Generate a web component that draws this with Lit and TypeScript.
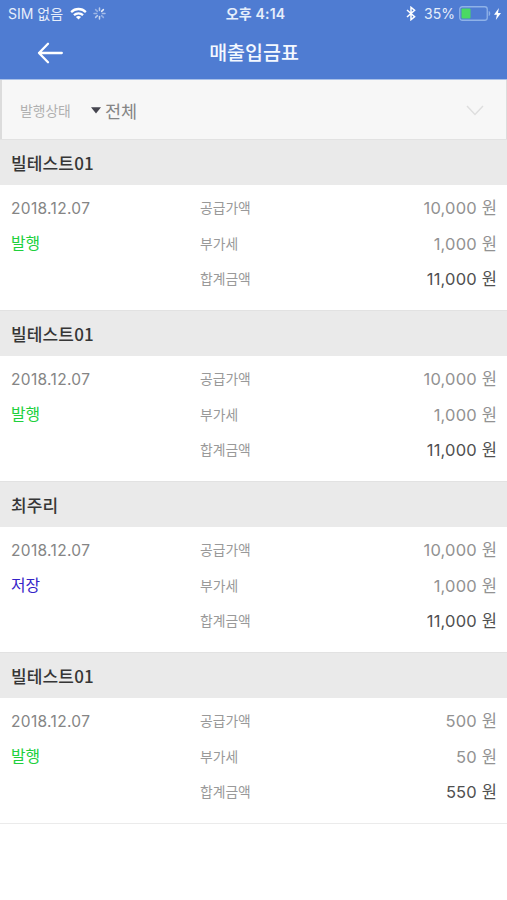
import { LitElement, html, css } from "lit";
import { customElement, property } from "lit/decorators.js";

interface Slip {
  name: string;
  date: string;
  status: string;
  saved?: boolean;
  supply: string;
  tax: string;
  total: string;
}

const SLIPS: Slip[] = [
  { name: "빌테스트01", date: "2018.12.07", status: "발행", supply: "10,000", tax: "1,000", total: "11,000" },
  { name: "빌테스트01", date: "2018.12.07", status: "발행", supply: "10,000", tax: "1,000", total: "11,000" },
  { name: "최주리", date: "2018.12.07", status: "저장", saved: true, supply: "10,000", tax: "1,000", total: "11,000" },
  { name: "빌테스트01", date: "2018.12.07", status: "발행", supply: "500", tax: "50", total: "550" },
];

@customElement("status-bar")
class StatusBar extends LitElement {
  static styles = css`
    :host {
      display: grid;
      grid-template-columns: 1fr auto 1fr;
      align-items: center;
      height: 27px;
      padding: 0 6px 0 8px;
      color: #e6eefb;
      font-size: 14px;
      line-height: 27px;
      white-space: nowrap;
    }
    .side { display: flex; align-items: center; }
    .right { justify-content: flex-end; }
    .wifi { margin-left: 7px; }
    .spinner { margin-left: 6px; }
    .clock { font-weight: 600; letter-spacing: 0.2px; padding-left: 2px; }
    .percent { margin-left: 8px; }
    .battery { margin-left: 4px; }
    .bolt { margin-left: 3px; }
    svg { display: block; }
  `;
  render() {
    return html`
      <div class="side">
        <span>SIM 없음</span>
        <svg class="wifi" width="17" height="13" viewBox="0 0 18 13" preserveAspectRatio="none" fill="none" stroke="#fff" stroke-width="2.4">
          <path d="M1.2 5.1C5.5 1 12.5 1 16.8 5.1" />
          <path d="M4.2 8.2C6.9 5.7 11.1 5.7 13.8 8.2" />
          <path d="M9 12.6L6.3 9.9C7.8 8.6 10.2 8.6 11.7 9.9Z" fill="#fff" stroke="none" />
        </svg>
        <svg class="spinner" width="13" height="13" viewBox="-6.5 -6.5 13 13" stroke="#fff" stroke-width="1.5" stroke-linecap="round">
          <path d="M0 -2.9V-5.5" opacity=".6" />
          <path d="M2.1 -2.1L3.9 -3.9" opacity=".85" />
          <path d="M2.9 0H5.5" opacity=".5" />
          <path d="M2.1 2.1L3.9 3.9" opacity=".4" />
          <path d="M0 2.9V5.5" opacity=".7" />
          <path d="M-2.1 2.1L-3.9 3.9" opacity=".6" />
          <path d="M-2.9 0H-5.5" opacity=".45" />
          <path d="M-2.1 -2.1L-3.9 -3.9" opacity=".4" />
        </svg>
      </div>
      <span class="clock">오후 4:14</span>
      <div class="side right">
        <svg width="10" height="15" viewBox="0 0 10 15" fill="none" stroke="#fff" stroke-width="1.5">
          <path d="M1 4L8.6 10.8L5 13.7V1.3L8.6 4.2L1 11" />
        </svg>
        <span class="percent">35%</span>
        <svg class="battery" width="32" height="15" viewBox="0 0 32 15">
          <rect x=".75" y=".75" width="27.5" height="13.5" rx="2.5" fill="none" stroke="#8fb2e8" stroke-width="1.3" />
          <rect x="2.5" y="2.5" width="9" height="10" rx=".8" fill="#4bd963" />
          <path d="M29.7 5C31.8 5.6 31.8 9.4 29.7 10Z" fill="#8fb2e8" />
        </svg>
        <svg class="bolt" width="7" height="12" viewBox="0 0 7 12" fill="#fff">
          <path d="M4.9 0L0 6.7H2.9L1.8 12L7 4.9H4Z" />
        </svg>
      </div>
    `;
  }
}

@customElement("slip-card")
class SlipCard extends LitElement {
  @property({ attribute: false }) slip!: Slip;
  static styles = css`
    :host { display: block; height: 171px; }
    .name {
      box-sizing: border-box;
      height: 46px;
      padding: 0 11px;
      border-top: 1px solid #e2e2e2;
      background: #eaeaea;
      color: #363636;
      font: 500 17px/45px "Noto Sans CJK KR", sans-serif;
      letter-spacing: 0.15px;
    }
    .body {
      display: grid;
      grid-template-columns: 189px 1fr auto;
      grid-auto-rows: 35.5px;
      padding: 6px 10px 0 11px;
      line-height: 35.5px;
      white-space: nowrap;
    }
    .date { color: #858585; font-size: 15.5px; letter-spacing: 0.33px; }
    .status { color: #20d03c; font-size: 15.8px; line-height: 34.5px; }
    .saved { color: #3422c8; }
    .label { grid-column: 2; color: #999; font-size: 13.8px; }
    .amount { grid-column: 3; text-align: right; color: #929292; font-size: 16.5px; letter-spacing: 0.2px; margin-right: -0.2px; }
    .total { color: #505050; }
  `;
  render() {
    const s = this.slip;
    return html`
      <div class="name">${s.name}</div>
      <div class="body">
        <span class="date">${s.date}</span>
        <span class="label">공급가액</span>
        <span class="amount">${s.supply} 원</span>
        <span class="status ${s.saved ? "saved" : ""}">${s.status}</span>
        <span class="label">부가세</span>
        <span class="amount">${s.tax} 원</span>
        <span class="label">합계금액</span>
        <span class="amount total">${s.total} 원</span>
      </div>
    `;
  }
}

@customElement("app-root")
class AppRoot extends LitElement {
  static styles = css`
    :host {
      display: block;
      height: 900px;
      overflow: hidden;
      background: #fff;
      font-family: Inter, "Noto Sans CJK KR", sans-serif;
    }
    .top { height: 79px; background: #4f7cd2; border-bottom: 1px solid #a9c0e8; }
    .nav {
      display: grid;
      grid-template-columns: 1fr auto 1fr;
      align-items: center;
      height: 50px;
      padding-left: 37px;
      padding-right: 36px;
    }
    .title { color: #f4f8ff; font-size: 19.5px; font-weight: 500; line-height: 50px; padding-top: 1px; }
    .filter {
      box-sizing: border-box;
      display: flex;
      align-items: center;
      height: 59px;
      padding: 1px 22px 0 18px;
      border: 1px solid #dcdcdc;
      border-top: 0;
      border-bottom: 0;
      border-left-width: 2px;
      background: #f7f7f7;
    }
    .caption { width: 71px; color: #b0b0b0; font-size: 13.8px; }
    .value { margin-left: 4px; color: #858585; font-size: 17.5px; }
    .chevron { margin-left: auto; }
    .end { border-top: 1px solid #ebebeb; }
    svg { display: block; }
  `;
  render() {
    return html`
      <header class="top">
        <status-bar></status-bar>
        <div class="nav">
          <svg width="27" height="22" viewBox="0 0 27 22" fill="none" stroke="#fff" stroke-width="2.3" stroke-linecap="round" stroke-linejoin="round">
            <path d="M24.8 11H2M11 1.8L2 11L11 20.2" />
          </svg>
          <span class="title">매출입금표</span>
        </div>
      </header>
      <div class="filter">
        <span class="caption">발행상태</span>
        <svg width="10" height="7" viewBox="0 0 10 7" fill="#45454f"><path d="M0 .3H10L5 6.5Z" /></svg>
        <span class="value">전체</span>
        <svg class="chevron" width="18" height="11" viewBox="0 0 18 11" fill="none" stroke="#dedede" stroke-width="1.4">
          <path d="M1 1L9 9.5L17 1" />
        </svg>
      </div>
      ${SLIPS.map((s) => html`<slip-card .slip=${s}></slip-card>`)}
      <div class="end"></div>
    `;
  }
}
